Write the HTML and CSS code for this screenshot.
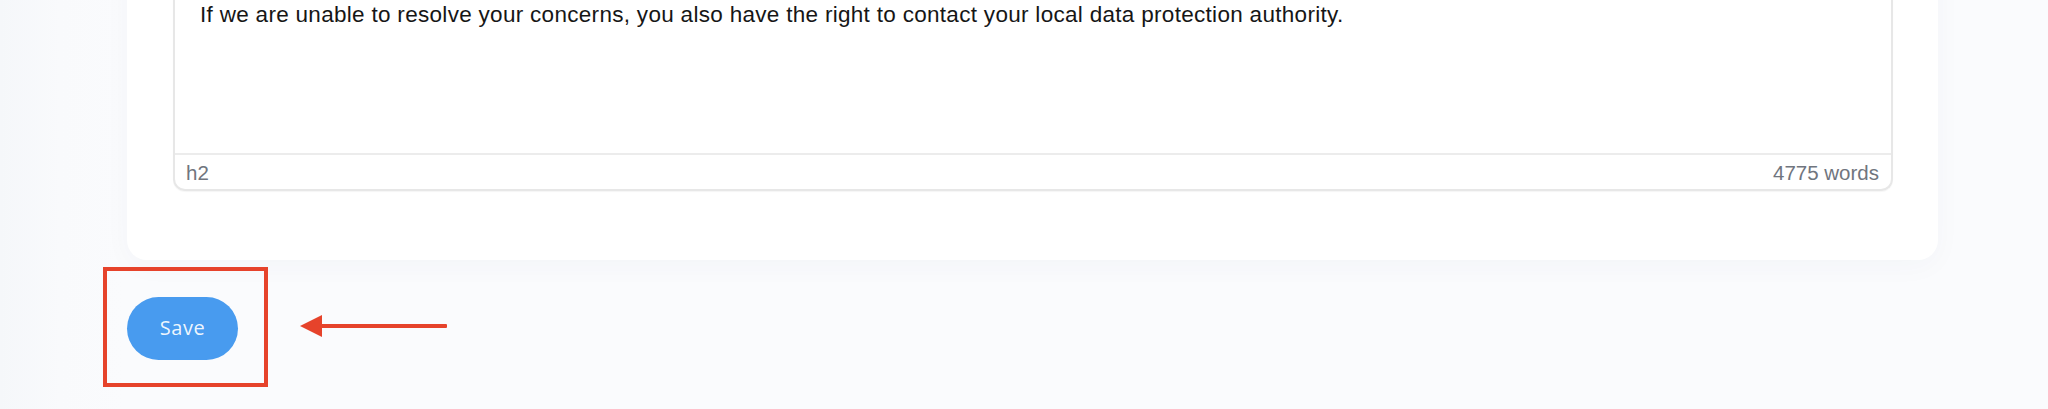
FILE: index.html
```html
<!DOCTYPE html>
<html lang="en">
<head>
<meta charset="utf-8">
<title>Privacy policy editor</title>
<link rel="stylesheet" href="styles.css">
</head>
<body>
<div class="page">
  <section class="card">
    <div class="editor">
      <div class="editor-body">
        <p class="editor-text">If we are unable to resolve your concerns, you also have the right to contact your local data protection authority.</p>
      </div>
      <div class="editor-footer">
        <span class="footer-path">h2</span>
        <span class="footer-count">4775 words</span>
      </div>
    </div>
  </section>
  <div class="actions">
    <div class="save-wrap">
      <button class="save-btn" type="button">Save</button>
      <span class="highlight"></span>
    </div>
    <svg class="pointer" width="148" height="24" viewBox="0 0 148 24" aria-hidden="true">
      <polygon points="0,11 22,0 22,22" fill="#e6432b"/>
      <rect x="20" y="9" width="127" height="4" rx="1" fill="#e6432b"/>
    </svg>
  </div>
</div>
</body>
</html>
```

FILE: styles.css
```css
* { box-sizing: border-box; }

html, body {
  margin: 0;
  height: 409px;
  overflow: hidden;
}

body {
  background: linear-gradient(to right, #f5f7fa 0px, #f9fafc 60px, #fafbfd 125px);
  font-family: "Liberation Sans", Arial, sans-serif;
}

.page {
  display: flex;
  flex-direction: column;
  padding: 0 110px 0 127px;
}

.card {
  margin-top: -60px;
  background: #ffffff;
  border-radius: 0 0 20px 20px;
  padding: 0 45px 69px 46px;
  box-shadow: 0 6px 28px rgba(40, 60, 110, 0.03);
}

.editor {
  border: 2px solid #e7e7e7;
  border-top: none;
  border-radius: 0 0 12px 12px;
  box-shadow: 0 1px 1px rgba(0, 0, 0, 0.04);
}

.editor-body {
  height: 213px;
  padding: 59px 24px 0 25px;
}

.editor-text {
  margin: 0;
  font-size: 22.5px;
  letter-spacing: 0.3px;
  line-height: 32px;
  color: #161616;
}

.editor-footer {
  display: flex;
  justify-content: space-between;
  align-items: center;
  height: 36px;
  padding: 1px 12px 0 11px;
  border-top: 2px solid #ececec;
  font-size: 20.5px;
  color: #70757e;
}

.actions {
  display: flex;
  align-items: center;
  padding-top: 37px;
}

.save-wrap {
  position: relative;
  display: flex;
}

.save-btn {
  width: 111px;
  height: 63px;
  border: none;
  border-radius: 32px;
  background: #489bef;
  color: rgba(255, 255, 255, 0.92);
  font-family: "Open Sans", "Noto Sans", sans-serif;
  font-size: 20px;
  letter-spacing: 0.6px;
  padding: 0 0 3px 0;
}

.highlight {
  position: absolute;
  left: -24px;
  right: -30px;
  top: -30px;
  bottom: -27px;
  border: 4px solid #e6432b;
  pointer-events: none;
}

.pointer {
  margin-left: 62px;
  margin-top: -4px;
  display: block;
}
```
